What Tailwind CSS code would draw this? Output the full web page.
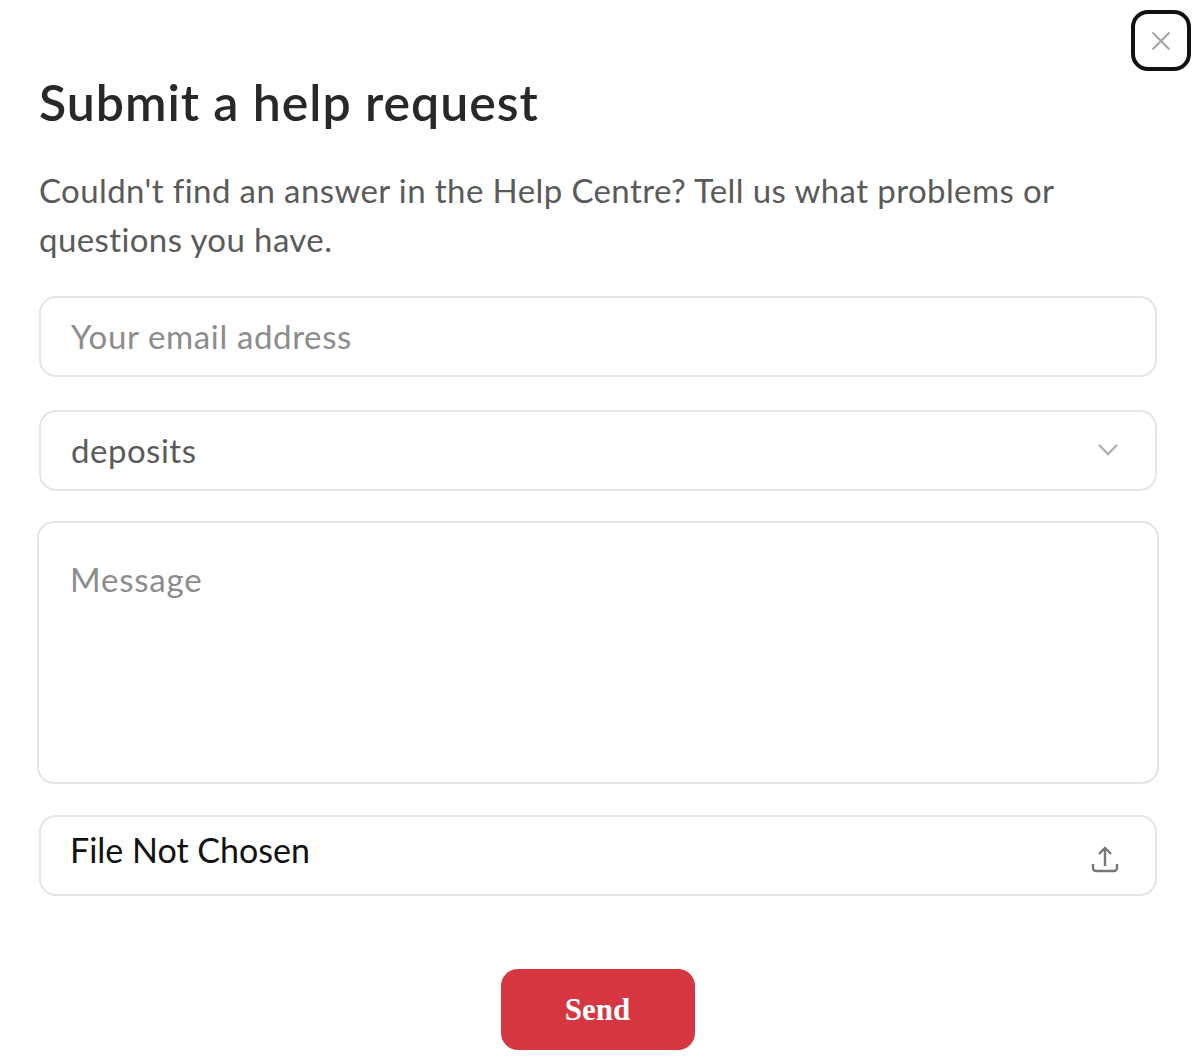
<!DOCTYPE html>
<html lang="en">
<head>
<meta charset="utf-8">
<title>Submit a help request</title>
<script src="https://cdn.jsdelivr.net/npm/@tailwindcss/browser@4"></script>
</head>
<body class="bg-white">
<main class="relative w-[1200px] h-[1062px] overflow-hidden bg-white font-['Lato',sans-serif] pl-[39px] pr-[43px] pt-[74px]">
  <button class="absolute left-[1131px] top-[10px] w-[60px] h-[61px] rounded-[17px] border-[4px] border-[#111] flex items-center justify-center" aria-label="Close">
    <svg width="24" height="24" viewBox="0 0 24 24" fill="none" stroke="#a3a3a3" stroke-width="2"><path d="M3.500 3.500 20.500 20.500M20.500 3.500 3.500 20.500"/></svg>
  </button>
  <h1 class="text-[50px] leading-[56px] font-semibold text-[#2a2727] tracking-[0.95px]">Submit a help request</h1>
  <p class="mt-[36px] text-[33px] leading-[49px] text-[#5a5a5a] tracking-[0.4px]">Couldn't find an answer in the Help Centre? Tell us what problems or questions you have.</p>
  <div class="mt-[32px] h-[81px] rounded-[17px] border-2 border-[#e5e5e5] flex items-center pl-[30px] text-[33px] text-[#8c8c8c] tracking-[0.63px]">Your email address</div>
  <div class="mt-[33px] h-[81px] rounded-[17px] border-2 border-[#e5e5e5] flex items-center justify-between pl-[30px] pr-[36px] text-[33px] text-[#5a5a5a] tracking-[0.5px]">
    <span>deposits</span>
    <svg width="22" height="16" viewBox="0 0 22 16" fill="none" stroke="#b0b0b0" stroke-width="2.400"><path d="M2 2 11 11 20 2"/></svg>
  </div>
  <div class="mt-[30px] -mx-[2px] h-[263px] rounded-[17px] border-2 border-[#e5e5e5] pl-[31px] pt-[36px] text-[33px] leading-[40px] text-[#8c8c8c] tracking-[0.8px]">Message</div>
  <div class="relative mt-[31px] h-[81px] rounded-[17px] border-2 border-[#e5e5e5] pl-[29px] pt-[11px] text-[34px] leading-[44px] text-[#111]">File Not Chosen
    <svg class="absolute right-[36px] top-[28px]" width="28" height="28" viewBox="0 0 28 28" fill="none" stroke="#777" stroke-width="2.400"><path d="M14 21V3M8 9 14 3 20 9"/><path d="M2 19v4a3 3 0 0 0 3 3h18a3 3 0 0 0 3-3v-4"/></svg>
  </div>
  <div class="mt-[73px] flex justify-center pr-[1px]">
    <button class="w-[194px] h-[81px] pt-[2px] rounded-[17px] bg-[#d53640] text-white font-['Liberation_Serif',serif] font-bold text-[31px]">Send</button>
  </div>
</main>
</body>
</html>
